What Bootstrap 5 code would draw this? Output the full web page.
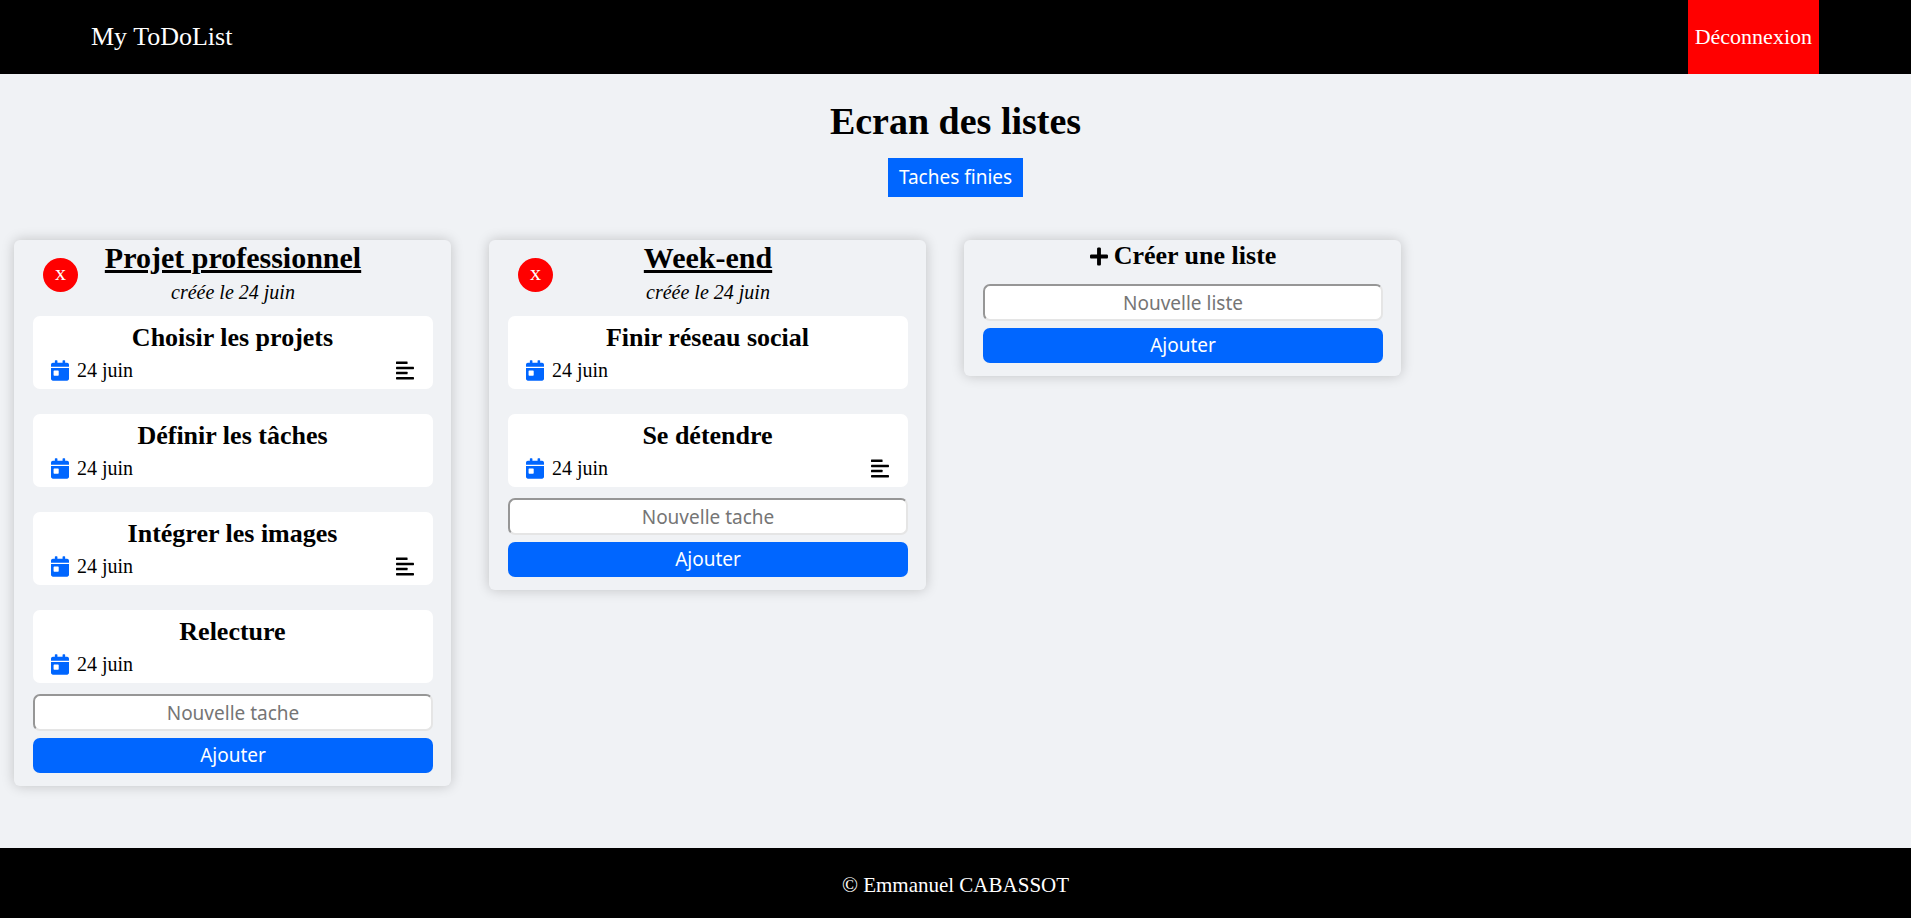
<!DOCTYPE html>
<html lang="fr">
<head>
<meta charset="utf-8">
<meta name="viewport" content="width=device-width, initial-scale=1">
<title>My ToDoList</title>
<link href="https://cdn.jsdelivr.net/npm/bootstrap@5.3.0/dist/css/bootstrap.min.css" rel="stylesheet">
<style>
  body { font-family: "Liberation Serif", "Times New Roman", serif; font-size: 20px; line-height: 24px; color: #000; background: #f0f2f5; }
  .top-bar { height: 74px; padding: 0 92px 0 91px; }
  .brand { font-size: 26px; }
  .logout { font-size: 22px; padding: 0 7px; background: #f00; border: 0; color: #fff; }
  .page-title { font-size: 38px; line-height: 44px; font-weight: 700; margin: 25px 0 15px; }
  .ui-font, .ui-font::placeholder { font-family: "Noto Sans", Tahoma, sans-serif; font-size: 19px; line-height: 25px; }
  .blue { background: #06f; color: #fff; border: 0; }
  .done-link { padding: 7px 11px; height: 39px; }
  .board { display: grid; grid-template-columns: repeat(4, minmax(0, 1fr)); gap: 38px; padding: 43px 35px 62px 14px; align-items: start; }
  .todo-list { padding: 0 18px 13px 19px; border-radius: 6px; box-shadow: 0 0 13px rgba(0, 0, 0, .2); }
  .list-head { display: grid; grid-template-columns: 45px 1fr 45px; height: 76px; }
  .remove { width: 35px; height: 34px; margin: 18px 0 0 10px; border: 0; background: #f00; color: #fff; font-size: 22px; line-height: 30px; padding: 0 0 4px; }
  .list-title { font-size: 30px; line-height: 36px; font-weight: 700; text-decoration: underline; text-decoration-thickness: 3px; margin: 0 0 4px; }
  .tasks { gap: 25px; }
  .task { height: 73px; padding: 7px 19px 0 18px; border-radius: 7px; }
  .task-title, .new-title { font-size: 26px; line-height: 30px; font-weight: 700; margin: 0; }
  .task-title { margin-bottom: 5px; }
  .new-title { padding: 1px 0 13px; gap: 6px; }
  .icon { width: 18px; height: 21px; fill: currentColor; }
  .icon-blue { color: #06f; }
  .add-form { gap: 7px; }
  .tasks + .add-form { margin-top: 11px; }
  .new-item { height: 37px; border: 2px solid #e5e5e5; border-top-color: #969696; border-left-color: #969696; border-radius: 7px; background: #fff; padding: 2px; }
  .new-item::placeholder { color: #757575; opacity: 1; }
  .add { height: 35px; border-radius: 7px; padding: 0; }
  .foot { height: 70px; font-size: 21px; }
</style>
<script src="https://cdn.jsdelivr.net/npm/bootstrap@5.3.0/dist/js/bootstrap.bundle.min.js"></script>
</head>
<body class="d-flex flex-column min-vh-100">
<svg class="d-none" aria-hidden="true">
  <symbol id="calendar" viewBox="0 0 448 512"><path d="M0 464c0 26.500 21.500 48 48 48h352c26.500 0 48-21.500 48-48V192H0v272zm64-192c0-8.800 7.200-16 16-16h96c8.800 0 16 7.200 16 16v96c0 8.800-7.200 16-16 16H80c-8.800 0-16-7.200-16-16v-96zM400 64h-48V16c0-8.800-7.200-16-16-16h-32c-8.800 0-16 7.200-16 16v48H160V16c0-8.800-7.200-16-16-16h-32c-8.800 0-16 7.200-16 16v48H48C21.500 64 0 85.500 0 112v48h448v-48c0-26.500-21.500-48-48-48z"/></symbol>
  <symbol id="lines" viewBox="0 0 448 512"><rect y="32" width="288" height="64" rx="13"/><rect y="160" width="448" height="64" rx="16"/><rect y="288" width="288" height="64" rx="13"/><rect y="416" width="448" height="64" rx="16"/></symbol>
  <symbol id="plus" viewBox="0 0 448 512"><path d="M416 208H272V64c0-17.670-14.330-32-32-32h-32c-17.670 0-32 14.330-32 32v144H32c-17.670 0-32 14.330-32 32v32c0 17.670 14.330 32 32 32h144v144c0 17.670 14.330 32 32 32h32c17.670 0 32-14.330 32-32V304h144c17.670 0 32-14.330 32-32v-32c0-17.670-14.330-32-32-32z"/></symbol>
</svg>

<header class="top-bar d-flex justify-content-between align-items-center bg-black text-white">
  <a class="brand text-white text-decoration-none" href="#">My ToDoList</a>
  <button class="logout h-100" type="button">Déconnexion</button>
</header>

<main class="flex-grow-1">
  <div class="text-center">
    <h1 class="page-title">Ecran des listes</h1>
    <a class="done-link ui-font blue d-inline-block text-decoration-none align-top" href="#">Taches finies</a>
  </div>

  <div class="board">
    <section class="todo-list">
      <div class="list-head text-center">
        <div><button class="remove rounded-circle d-block" type="button" aria-label="Supprimer">x</button></div>
        <div><h2 class="list-title text-nowrap">Projet professionnel</h2><em class="d-block">créée le 24 juin</em></div>
      </div>
      <div class="tasks d-flex flex-column">
        <article class="task bg-white">
          <h3 class="task-title text-center">Choisir les projets</h3>
          <div class="d-flex align-items-center"><svg class="icon icon-blue me-2"><use href="#calendar"/></svg><span>24 juin</span><svg class="icon ms-auto"><use href="#lines"/></svg></div>
        </article>
        <article class="task bg-white">
          <h3 class="task-title text-center">Définir les tâches</h3>
          <div class="d-flex align-items-center"><svg class="icon icon-blue me-2"><use href="#calendar"/></svg><span>24 juin</span></div>
        </article>
        <article class="task bg-white">
          <h3 class="task-title text-center">Intégrer les images</h3>
          <div class="d-flex align-items-center"><svg class="icon icon-blue me-2"><use href="#calendar"/></svg><span>24 juin</span><svg class="icon ms-auto"><use href="#lines"/></svg></div>
        </article>
        <article class="task bg-white">
          <h3 class="task-title text-center">Relecture</h3>
          <div class="d-flex align-items-center"><svg class="icon icon-blue me-2"><use href="#calendar"/></svg><span>24 juin</span></div>
        </article>
      </div>
      <form class="add-form d-flex flex-column">
        <input class="new-item ui-font w-100 text-center" type="text" placeholder="Nouvelle tache" aria-label="Nouvelle tache">
        <button class="add ui-font blue w-100" type="button">Ajouter</button>
      </form>
    </section>

    <section class="todo-list">
      <div class="list-head text-center">
        <div><button class="remove rounded-circle d-block" type="button" aria-label="Supprimer">x</button></div>
        <div><h2 class="list-title text-nowrap">Week-end</h2><em class="d-block">créée le 24 juin</em></div>
      </div>
      <div class="tasks d-flex flex-column">
        <article class="task bg-white">
          <h3 class="task-title text-center">Finir réseau social</h3>
          <div class="d-flex align-items-center"><svg class="icon icon-blue me-2"><use href="#calendar"/></svg><span>24 juin</span></div>
        </article>
        <article class="task bg-white">
          <h3 class="task-title text-center">Se détendre</h3>
          <div class="d-flex align-items-center"><svg class="icon icon-blue me-2"><use href="#calendar"/></svg><span>24 juin</span><svg class="icon ms-auto"><use href="#lines"/></svg></div>
        </article>
      </div>
      <form class="add-form d-flex flex-column">
        <input class="new-item ui-font w-100 text-center" type="text" placeholder="Nouvelle tache" aria-label="Nouvelle tache">
        <button class="add ui-font blue w-100" type="button">Ajouter</button>
      </form>
    </section>

    <section class="todo-list">
      <h2 class="new-title d-flex justify-content-center align-items-center"><svg class="icon"><use href="#plus"/></svg>Créer une liste</h2>
      <form class="add-form d-flex flex-column">
        <input class="new-item ui-font w-100 text-center" type="text" placeholder="Nouvelle liste" aria-label="Nouvelle liste">
        <button class="add ui-font blue w-100" type="button">Ajouter</button>
      </form>
    </section>
  </div>
</main>

<footer class="foot d-flex justify-content-center align-items-center bg-black text-white pt-1">© Emmanuel CABASSOT</footer>
</body>
</html>
